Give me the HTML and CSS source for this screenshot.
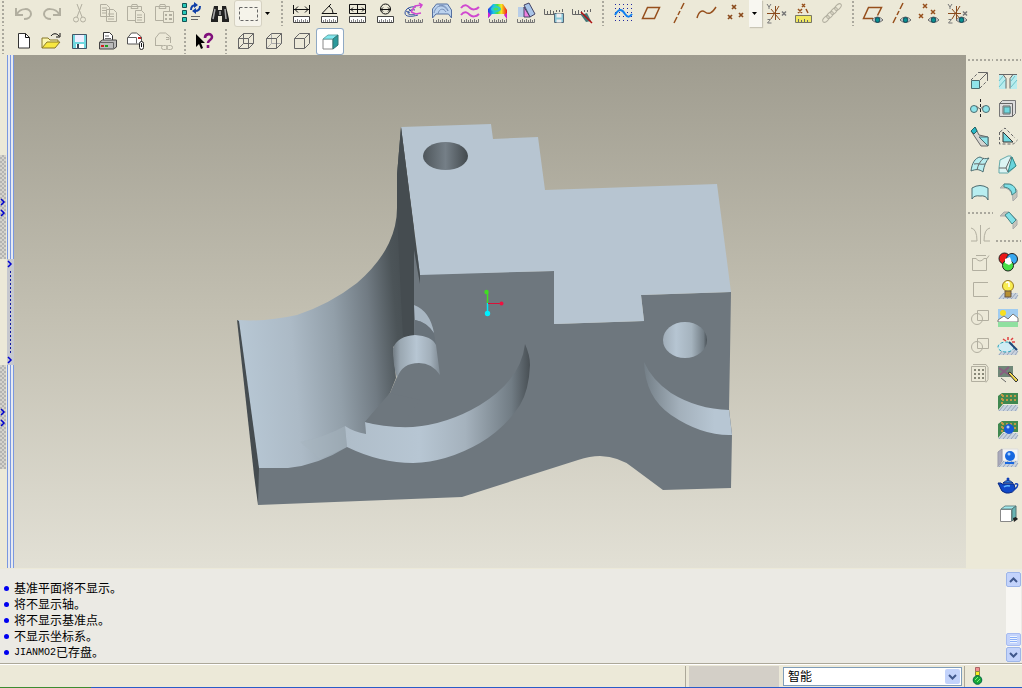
FILE: index.html
```
<!DOCTYPE html>
<html lang="zh-CN">
<head>
    <meta charset="UTF-8">
    <meta name="viewport" content="width=device-width, initial-scale=1.0">
    <title>JIANMO2</title>
    <link rel="stylesheet" href="styles.css">
</head>
<body>
    <!-- shared icon parts -->
    <svg class="defs" width="0" height="0">
        <defs>
            <symbol id="ruler" viewBox="0 0 24 24">
                <path d="M3.500 15.500h16v6h-16z" fill="#fff" stroke="#444"/>
                <path d="M5.500 21v-2M7.500 21v-3M9.500 21v-2M11.500 21v-3M13.500 21v-2M15.500 21v-3M17.500 21v-2" stroke="#888"/>
            </symbol>
            <symbol id="ruler-thin" viewBox="0 0 24 24">
                <path d="M3.500 18v3.500h17V18M6.500 21v-2M8.500 21v-3M10.500 21v-2M12.500 21v-3M14.500 21v-2M16.500 21v-3M18.500 21v-2" fill="none" stroke="#777"/>
            </symbol>
            <symbol id="eye" viewBox="0 0 24 24">
                <path d="M11 19q5.500-6 11 0q-5.500 5-11 0z" fill="#e4e4e4" stroke="#666"/>
                <circle cx="16.500" cy="19" r="2.400" fill="#089090" stroke="#145"/>
            </symbol>
            <symbol id="floor" viewBox="0 0 24 24">
                <path d="M2 21l5-6h15l-1 6z" fill="#c9d3df"/>
                <path d="M3 21l5-6M7 21l5-6M11 21l5-6M15 21l5-6M19 21l3-4" stroke="#98a5b8"/>
            </symbol>
            <symbol id="axes" viewBox="0 0 24 24">
                <path d="M3 12.500h13M7 8l9 11M15 5L7 18M11.500 5v14" stroke="#8a4a1c"/>
                <path d="M3 3l2 3 2-3M5 6v2M3.500 18.500h3l-3 3.500h4" fill="none" stroke="#777"/>
                <path d="M18 10.500l4 4M22 10.500l-4 4" stroke="#777" stroke-width="1.500"/>
            </symbol>
            <symbol id="points" viewBox="0 0 24 24">
                <path d="M9 4l4 4M13 4l-4 4M16 12l4 4M20 12l-4 4M5 14l4 4M9 14l-4 4" stroke="#8a4a1c" stroke-width="1.700"/>
            </symbol>
            <linearGradient id="rainbow">
                <stop offset="0" stop-color="#2038e8"/>
                <stop offset=".3" stop-color="#18c8e8"/>
                <stop offset=".5" stop-color="#50e040"/>
                <stop offset=".7" stop-color="#f8e820"/>
                <stop offset="1" stop-color="#f01818"/>
            </linearGradient>
        </defs>
    </svg>

    <header class="toolbars">
        <div class="toolbar">
            <span class="grip first"></span>
            <button class="tool" type="button" aria-label="撤消"><svg viewBox="0 0 24 24"><path d="M4 7v7h7M5 13c3-6 14-7 14 0c0 3-3 5-7 5" class="off thick"/></svg></button>
            <button class="tool" type="button" aria-label="重做"><svg viewBox="0 0 24 24"><path d="M20 7v7h-7M19 13c-3-6-15-7-15 0c0 3 3 5 7 5" class="off thick"/></svg></button>
            <button class="tool" type="button" aria-label="剪切"><svg viewBox="0 0 24 24"><path d="M9 3l5 13M14 3L9 16" class="off"/><circle cx="8" cy="18.500" r="2.500" class="off"/><circle cx="15" cy="18.500" r="2.500" class="off"/></svg></button>
            <button class="tool" type="button" aria-label="复制"><svg viewBox="0 0 24 24"><path d="M4.500 3.500h6l3 3v9h-9zM10.500 8.500h7l3 3v9h-10z" class="off paper"/><path d="M6 7h5M6 9.500h4M6 12h4M12 13h6M12 15.500h6M12 18h6" class="off"/></svg></button>
            <button class="tool" type="button" aria-label="粘贴"><svg viewBox="0 0 24 24"><path d="M3.500 5.500h14v14h-14zM7 7.500l1-4h5l1 4z" class="off"/><path d="M11.500 9.500h6l3 3v9h-9z" class="off paper"/><path d="M13 14h5M13 16.500h5M13 19h5" class="off"/></svg></button>
            <button class="tool" type="button" aria-label="选择性粘贴"><svg viewBox="0 0 24 24"><path d="M3.500 5.500h14v14h-14zM7 7.500l1-4h5l1 4z" class="off"/><path d="M11.500 10.500h10v11h-10z" class="off paper"/><path d="M13 14h2M17 14h3M13 18h2M17 18h3" class="off thick"/></svg></button>
            <button class="tool" type="button" aria-label="再生"><svg viewBox="0 0 24 24"><path d="M2.500 2.500h4v4h-4zM2.500 9.500h4v4h-4zM2.500 16.500h4v4h-4z" fill="#28c8b8" stroke="#155"/><path d="M11 9c0-4 2-5 5-5M20 5c0 4-2 5-5 5" class="navy"/><path d="M14 1l4 3-4 3zM16 7l-4 3 4 3z" fill="#1040a8"/><path d="M11 15.500h9M11 18.500h7" class="gray"/></svg></button>
            <button class="tool" type="button" aria-label="查找"><svg viewBox="0 0 24 24"><path d="M6 5h4v4h4V5h4l3 13v3h-7v-6h-4v6H3v-3z" fill="#222"/><path d="M7 8L5 18M17 8l1 10M12 10v4" stroke="#aaa" stroke-width="1.500"/></svg></button>
            <button class="tool raised" type="button" aria-label="选取框"><svg viewBox="0 0 24 24"><path d="M3.500 6.500h18v13h-18z" class="gray dash"/></svg></button>
            <button class="drop" type="button" aria-label="选取选项"><svg viewBox="0 0 7 4"><path d="M1 0h5L3.500 3z"/></svg></button>
            <span class="grip"></span>
            <button class="tool" type="button" aria-label="距离"><svg viewBox="0 0 24 24"><path d="M3.500 4v9M19.500 4v9M4 8.500h15M8 5.500l-3 3 3 3M15 5.500l3 3-3 3" class="ink"/><use href="#ruler"/></svg></button>
            <button class="tool" type="button" aria-label="角"><svg viewBox="0 0 24 24"><path d="M19 12.500H4L13 3M11 5q4 3 4 7" class="ink"/><use href="#ruler"/></svg></button>
            <button class="tool" type="button" aria-label="区域"><svg viewBox="0 0 24 24"><path d="M3.500 3.500h16v9h-16zM11.500 3v10M4 8.500h15M7 6.500l-2 2 2 2M16 6.500l2 2-2 2" class="ink"/><use href="#ruler"/></svg></button>
            <button class="tool" type="button" aria-label="直径"><svg viewBox="0 0 24 24"><circle cx="11.500" cy="8" r="5" class="ink"/><path d="M6 8.500h11M9 6.500l-2 2 2 2M14 6.500l2 2-2 2" class="ink"/><use href="#ruler"/></svg></button>
            <button class="tool" type="button" aria-label="曲率"><svg viewBox="0 0 24 24"><path d="M14 6C8 5 3 8 3 12s6 4 13 2M13 9c-4-1-7 1-7 3s4 2 7 1M4 10l4 2M6 7l3 3" class="blue"/><path d="M9 11l4-6 6-1M9 11l5 2 5-1M17 2l3 2-2 3" class="magenta"/><use href="#ruler-thin"/></svg></button>
            <button class="tool" type="button" aria-label="截面"><svg viewBox="0 0 24 24"><path d="M2.500 17V8l4-5h11l4 6v8l-3-4H6z" fill="#bcd3ee" stroke="#5570a0"/><path d="M4 12c2-9 10-9 14-2M8 13c1-6 6-6 8-2M9 5c4-2 8 1 9 5" class="blue fine"/><use href="#ruler-thin"/></svg></button>
            <button class="tool" type="button" aria-label="偏移"><svg viewBox="0 0 24 24"><path d="M3 7c4-5 7-2 9 0s6 2 9-1M3 14c4-5 7-2 9 0s6 2 9-1" class="magenta thick"/><use href="#ruler-thin"/></svg></button>
            <button class="tool" type="button" aria-label="着色曲率"><svg viewBox="0 0 24 24"><path d="M2 17V8l5-5h10l4 6v9l-3-5H6z" fill="url(#rainbow)"/><ellipse cx="10" cy="8" rx="5" ry="3" fill="#28c8d8"/><ellipse cx="10" cy="8" rx="2.500" ry="1.500" fill="#48e060"/><path d="M2 17v-6l3 3M21 18v-6l-3 2" fill="#d020d0"/><use href="#ruler-thin"/></svg></button>
            <button class="tool" type="button" aria-label="拔模检测"><svg viewBox="0 0 24 24"><path d="M4 6h6v10H4z" fill="#b8cde8"/><path d="M10 4l5-2 6 11-5 3z" fill="#a8c4e8" stroke="#446"/><path d="M10 6v10h6z" fill="#f080e0" stroke="#446"/><use href="#ruler-thin"/></svg></button>
            <button class="tool" type="button" aria-label="保存分析"><svg viewBox="0 0 24 24"><path d="M2.500 8v5.500h10M5.500 13v-3M8.500 13V9M11.500 13v-3M14.500 11V9M17.500 11V9M20.500 11V8" class="gray"/><path d="M12.500 12.500h9v9h-9z" fill="#8ac8d8" stroke="#567"/><path d="M14.500 12.500h5v4h-5zM14.500 18.500h5v3h-5z" fill="#eee"/></svg></button>
            <button class="tool" type="button" aria-label="隐藏分析"><svg viewBox="0 0 24 24"><path d="M2.500 8v5.500h10M5.500 13v-3M8.500 13V9M11.500 13v-3M14.500 11V9M17.500 11V9M20.500 11V8" class="gray"/><path d="M11 14l6-2 4 8-5 1z" fill="#477"/><path d="M11 11l11 11" stroke="#b01010" stroke-width="1.500"/></svg></button>
            <span class="grip"></span>
            <button class="tool" type="button" aria-label="草绘"><svg viewBox="0 0 24 24"><path d="M4 3.500h17M4 7.500h17M4 11.500h17M4 15.500h17M4 19.500h17" class="dots"/><path d="M4 14c4-7 7-6 10-1 2 3 4 4 7 0" class="azure thick"/></svg></button>
            <button class="tool" type="button" aria-label="平面"><svg viewBox="0 0 24 24"><path d="M8.500 6.500h12l-5 11h-12z" class="brown"/></svg></button>
            <button class="tool" type="button" aria-label="轴"><svg viewBox="0 0 24 24"><path d="M17 2l-3 6M13 10l-2 4M10 16l-3 6" class="brown"/></svg></button>
            <button class="tool" type="button" aria-label="曲线"><svg viewBox="0 0 24 24"><path d="M2 17c2-7 5-8 8-6 4 3 7 1 11-5" class="brown"/></svg></button>
            <button class="tool" type="button" aria-label="点"><svg viewBox="0 0 24 24"><use href="#points"/></svg></button>
            <button class="drop lifted" type="button" aria-label="点选项"><svg viewBox="0 0 7 4"><path d="M1 0h5L3.500 3z"/></svg></button>
            <button class="tool" type="button" aria-label="坐标系"><svg viewBox="0 0 24 24"><use href="#axes"/></svg></button>
            <button class="tool" type="button" aria-label="分析特征"><svg viewBox="0 0 24 24"><path d="M10 3l3 3M13 3l-3 3M6 8l4 4M10 8l-4 4M14 8l2 4" class="brown"/><path d="M3.500 14.500h16v7h-16z" fill="#f0e860" stroke="#776"/><path d="M6.500 21v-3M9.500 21v-2M12.500 21v-3M15.500 21v-2" class="gray"/></svg></button>
            <button class="tool" type="button" aria-label="参照"><svg viewBox="0 0 24 24"><ellipse cx="6" cy="18" rx="4" ry="2.200" transform="rotate(-45 6 18)" class="off"/><ellipse cx="10" cy="14" rx="4" ry="2.200" transform="rotate(-45 10 14)" class="off"/><ellipse cx="14" cy="10" rx="4" ry="2.200" transform="rotate(-45 14 10)" class="off"/><ellipse cx="18" cy="6" rx="4" ry="2.200" transform="rotate(-45 18 6)" class="off"/></svg></button>
            <span class="grip"></span>
            <button class="tool" type="button" aria-label="显示平面"><svg viewBox="0 0 24 24"><path d="M12 17.500H2.500l5-11h13l-4 8" class="brown"/><use href="#eye"/></svg></button>
            <button class="tool" type="button" aria-label="显示轴"><svg viewBox="0 0 24 24"><path d="M14 2l-3 6M10 10l-2 4M7 16l-3 6" class="brown"/><use href="#eye"/></svg></button>
            <button class="tool" type="button" aria-label="显示点"><svg viewBox="0 0 24 24"><path d="M6 3l4 4M10 3L6 7M14 9l4 4M18 9l-4 4M2 13l4 4M6 13l-4 4" class="brown"/><use href="#eye"/></svg></button>
            <button class="tool" type="button" aria-label="显示坐标系"><svg viewBox="0 0 24 24"><use href="#axes"/><use href="#eye"/></svg></button>
        </div>
        <div class="toolbar">
            <span class="grip first"></span>
            <button class="tool" type="button" aria-label="新建"><svg viewBox="0 0 24 24"><path d="M6.500 4.500h7l4 4v10.500h-11z" fill="#fff" stroke="#333"/><path d="M13.500 4.500v4h4" class="ink"/></svg></button>
            <button class="tool" type="button" aria-label="打开"><svg viewBox="0 0 24 24"><path d="M2 19V9h6l2 2h8v3" fill="#fbf6b0" stroke="#887828"/><path d="M2 19l5-6h13l-5 6z" fill="#f8e840" stroke="#887828"/><path d="M11 7c2-3 6-3 8 0M20 4v4h-4" class="ink"/></svg></button>
            <button class="tool" type="button" aria-label="保存"><svg viewBox="0 0 24 24"><path d="M4.500 5.500h14v14h-14z" fill="#70d8e0" stroke="#456"/><path d="M7 6h9v7H7z" fill="#eef"/><path d="M8 15h8v4H8z" fill="#fff"/><path d="M9 15h2v4H9z" fill="#345"/></svg></button>
            <button class="tool" type="button" aria-label="打印"><svg viewBox="0 0 24 24"><path d="M7.500 12V3.500h6l3 3V12" fill="#fff" stroke="#333"/><path d="M9 7h4M9 9.500h6" class="gray"/><path d="M3.500 13l3-2h14v7l-3 2h-14z" fill="#bbb" stroke="#444"/><path d="M3.500 13.500h14v6" class="gray"/><path d="M5 16h3v2H5z" fill="#d02020"/><path d="M9 16h3v2H9z" fill="#20a020"/></svg></button>
            <button class="tool" type="button" aria-label="发送附件"><svg viewBox="0 0 24 24"><path d="M3.500 15V9l4-5h5l5 4v7z" fill="#fff" stroke="#555"/><path d="M3.500 8.500h9v6" class="gray"/><path d="M14 8h3v2h-3z" fill="#d02020"/><rect x="15.500" y="12.500" width="4" height="8" rx="2" fill="#fff" stroke="#222"/><path d="M17.500 14v4" class="ink"/></svg></button>
            <button class="tool" type="button" aria-label="发送链接"><svg viewBox="0 0 24 24"><path d="M3.500 17V9l4-5h6l5 4v6M3.500 16.500h7M14 8.500h3v2h-3" class="off"/><rect x="9.500" y="16.500" width="6" height="4" rx="2" class="off"/><rect x="14.500" y="16.500" width="6" height="4" rx="2" class="off"/></svg></button>
            <span class="grip"></span>
            <button class="tool" type="button" aria-label="上下文帮助"><svg viewBox="0 0 24 24"><path d="M3 5v13l3-3 2 5 2-1-2-5h4z"/><path d="M12 9c0-5 7-5 7-1 0 3-4 3-4 6M15 16v3" stroke="#80107c" stroke-width="2.600" fill="none"/></svg></button>
            <span class="grip"></span>
            <button class="tool" type="button" aria-label="线框"><svg viewBox="0 0 24 24"><path d="M4.500 9.500h10v10h-10zM9.500 4.500h10v10h-10zM4.500 9.500l5-5M14.500 9.500l5-5M4.500 19.500l5-5M14.500 19.500l5-5" class="gray"/></svg></button>
            <button class="tool" type="button" aria-label="隐藏线"><svg viewBox="0 0 24 24"><path d="M9.500 4.500v10h10M4.500 19.500l5-5" stroke="#aaa" fill="none"/><path d="M4.500 9.500h10v10h-10zM4.500 9.500l5-5h10v10l-5 5M14.500 9.500l5-5" class="gray"/></svg></button>
            <button class="tool" type="button" aria-label="无隐藏线"><svg viewBox="0 0 24 24"><path d="M4.500 9.500h10v10h-10zM4.500 9.500l5-5h10v10l-5 5M14.500 9.500l5-5" class="gray"/></svg></button>
            <button class="tool pressed" type="button" aria-label="着色"><svg viewBox="0 0 24 24"><path d="M5 10h10v10H5z" fill="#fff" stroke="#888"/><path d="M5 10l5-4h10l-5 4z" fill="#80e8f0" stroke="#6aa"/><path d="M15 10l5-4v10l-5 4z" fill="#2a9a9c" stroke="#377"/></svg></button>
        </div>
    </header>

    <main class="workspace">
        <div class="sash">
            <div class="sash-outer">
                <button class="sash-button" type="button" aria-label="展开导航器"><svg viewBox="0 0 6 104"><path d="M1 44l3 3-3 3M1 55l3 3-3 3" class="chevron"/></svg></button>
                <button class="sash-button" type="button" aria-label="展开浏览器"><svg viewBox="0 0 6 104"><path d="M1 44l3 3-3 3M1 55l3 3-3 3" class="chevron"/></svg></button>
            </div>
            <div class="sash-inner">
                <button class="sash-button tall" type="button" aria-label="折叠"><svg viewBox="0 0 7 106"><path d="M1 2l3 3-3 3M1 98l3 3-3 3" class="chevron"/><path d="M3.500 12v82" stroke="#1018a0" stroke-dasharray="2 2"/></svg></button>
            </div>
        </div>

        <section class="viewport">
            <svg class="model" viewBox="14 55 952 513" role="img" aria-label="JIANMO2">
                <defs>
                    <linearGradient id="wall" gradientUnits="userSpaceOnUse" x1="240" y1="350" x2="415" y2="335">
                        <stop offset="0" stop-color="#b7c7d4"/>
                        <stop offset=".3" stop-color="#acbac6"/>
                        <stop offset=".55" stop-color="#929fa9"/>
                        <stop offset=".75" stop-color="#717b83"/>
                        <stop offset=".9" stop-color="#4c5458"/>
                        <stop offset="1" stop-color="#454c50"/>
                    </linearGradient>
                    <linearGradient id="band" gradientUnits="userSpaceOnUse" x1="345" y1="0" x2="530" y2="0">
                        <stop offset="0" stop-color="#afbdc9"/>
                        <stop offset=".4" stop-color="#b7c6d3"/>
                        <stop offset=".65" stop-color="#a5b2bd"/>
                        <stop offset=".9" stop-color="#717c84"/>
                        <stop offset="1" stop-color="#484f54"/>
                    </linearGradient>
                    <linearGradient id="right-band">
                        <stop offset="0" stop-color="#747f87"/>
                        <stop offset=".4" stop-color="#a3b0bb"/>
                        <stop offset=".8" stop-color="#b7c6d3"/>
                    </linearGradient>
                    <linearGradient id="stub">
                        <stop offset="0" stop-color="#717b83"/>
                        <stop offset=".15" stop-color="#9aa7b1"/>
                        <stop offset=".5" stop-color="#b7c6d3"/>
                        <stop offset=".8" stop-color="#a2afba"/>
                        <stop offset="1" stop-color="#7e8992"/>
                    </linearGradient>
                    <linearGradient id="hole-top">
                        <stop offset="0" stop-color="#4e565b"/>
                        <stop offset=".5" stop-color="#757f87"/>
                        <stop offset="1" stop-color="#42494d"/>
                    </linearGradient>
                    <linearGradient id="hole-front">
                        <stop offset="0" stop-color="#a0adb8"/>
                        <stop offset=".3" stop-color="#b6c5d2"/>
                        <stop offset=".65" stop-color="#a5b3be"/>
                        <stop offset=".92" stop-color="#737e86"/>
                        <stop offset="1" stop-color="#485056"/>
                    </linearGradient>
                </defs>
                <!-- front face -->
                <path d="M412 240L425 274L554 271V324L644 321L641 295L731 292L730 355L729 409L732 434L731 488L663 490L632 467Q620 457 600 456Q590 456 578 460L462 497L258 505V468L345 426L390 393L413 340Z" fill="#6e777e"/>
                <!-- top face -->
                <path d="M401 127L491 124L493 139L538 137L545 190L717 184L731 292L641 295L644 321L554 324V271L420 275Z" fill="#b7c5d1"/>
                <!-- curved wall -->
                <path d="M238 320Q265 322 297 315Q330 304 357 283Q379 264 389 243Q397 226 397 208V175L401 127L414 230V332L393 347L396 378L390 393L365 422L366 435L347 447Q318 465 288 468H258Z" fill="url(#wall)"/>
                <path d="M401 127L420 275V284L414 250V338L403 336Q400 280 397 208V175Z" fill="#454c50"/>
                <path d="M345 426Q325 437 300 442L320 459Q335 453 347 447Z" fill="#a5b3be" opacity=".5"/>
                <path d="M237 320L239 321L259 468L258 505L254 475Z" fill="#454c50"/>
                <!-- large boss edge -->
                <path d="M345 426Q354 432 366 434L365 422Q385 428 413 427Q448 424 480 405Q521 380 525 344Q530 355 530 365Q529 390 520 405Q505 428 480 443Q447 462 413 463Q380 463 347 447Z" fill="url(#band)"/>
                <path d="M365 422L390 393L420 400L400 427Z" fill="#6e777e"/>
                <!-- small boss -->
                <path d="M414 305Q430 311 434 333Q427 322 415 320Z" fill="#a8b6c2"/>
                <path d="M415 320Q427 322 434 334L436 345L414 335Z" fill="#68727a"/>
                <path d="M393 348Q398 336 415 335Q432 336 436 345L440 375Q432 363 419 363Q402 363 397 378Q393 365 393 348Z" fill="url(#stub)"/>
                <!-- right boss edge -->
                <path d="M644 362Q652 380 671 393Q697 409 729 410L732 435Q702 436 671 415Q645 397 644 362Z" fill="url(#right-band)"/>
                <!-- holes -->
                <ellipse cx="445.500" cy="156" rx="22.500" ry="14" fill="url(#hole-top)"/>
                <ellipse cx="685" cy="340" rx="22" ry="18" fill="url(#hole-front)"/>
                <!-- spin centre -->
                <path d="M487.500 292V303" stroke="#40e020" stroke-width="1.500"/>
                <path d="M487.500 303V313" stroke="#00e8f8" stroke-width="1.500"/>
                <path d="M488 303.500H501" stroke="#d81038"/>
                <circle cx="486.500" cy="292" r="2.200" fill="#40e020"/>
                <circle cx="501.500" cy="303.500" r="2" fill="#f01040"/>
                <circle cx="487.500" cy="313.500" r="2.700" fill="#00f0ff"/>
            </svg>
        </section>

        <aside class="side">
            <div class="side-column">
                <span class="grip-row"></span>
                <button class="tool side-tool" type="button" aria-label="拉伸"><svg viewBox="0 0 24 24"><path d="M3.500 12.500h8v8h-8z" class="cyan"/><path d="M3 12l8-8M12 20l8-8" class="gray dash"/><path d="M11 4.500h8.500V12M12 12l7-7" class="gray"/></svg></button>
                <button class="tool side-tool" type="button" aria-label="镜像"><svg viewBox="0 0 24 24"><circle cx="6" cy="13" r="3.500" class="cyan"/><circle cx="18" cy="13" r="3.500" class="cyan"/><path d="M12.500 3v20" stroke="#222" stroke-dasharray="3 2"/><path d="M8 10l4 3M16 10l-4 3" class="gray"/></svg></button>
                <button class="tool side-tool" type="button" aria-label="扫描混合"><svg viewBox="0 0 24 24"><path d="M3 7l4-4 4 8 9 2v9h-7z" fill="#d4d4d0" stroke="#666"/><path d="M3 7l4-4 2 4-3 3z" fill="#28b8c8" stroke="#266"/><path d="M11 13h9v9z" class="cyan"/></svg></button>
                <button class="tool side-tool" type="button" aria-label="边界混合"><svg viewBox="0 0 24 24"><path d="M3 19c1-8 4-13 9-14 3 2 6 2 9 1-3 3-5 8-6 14-4-3-7-3-12-1z" class="cyan pale"/><path d="M6 12c4-1 7 1 11 0M9 18c1-5 3-9 7-12" class="gray"/></svg></button>
                <button class="tool side-tool" type="button" aria-label="造型"><svg viewBox="0 0 24 24"><path d="M4 8q8-5 16 0v12q-2-5-8-4-6-1-8 3z" class="cyan pale"/></svg></button>
                <span class="grip-row wide"></span>
                <button class="tool side-tool" type="button" aria-label="合并"><svg viewBox="0 0 24 24"><path d="M12.500 3v19M3 6q6 1 6 13H3M22 6q-6 1-6 13h6" class="off"/></svg></button>
                <button class="tool side-tool" type="button" aria-label="修剪"><svg viewBox="0 0 24 24"><path d="M4.500 8.500v12h14v-12M4 8.500h4q4 5 8 0h3l2-3M8 5.500h10" class="off"/></svg></button>
                <button class="tool side-tool" type="button" aria-label="延伸"><svg viewBox="0 0 24 24"><path d="M20 4.500H5.500v14H20" class="off"/></svg></button>
                <button class="tool side-tool" type="button" aria-label="交截"><svg viewBox="0 0 24 24"><circle cx="9" cy="13" r="5.500" class="off"/><path d="M9.500 4.500h11v10h-11z" class="off"/></svg></button>
                <button class="tool side-tool" type="button" aria-label="投影"><svg viewBox="0 0 24 24"><circle cx="9" cy="13" r="5.500" class="off"/><path d="M9.500 4.500h11v10h-11z" class="off"/></svg></button>
                <button class="tool side-tool" type="button" aria-label="阵列"><svg viewBox="0 0 24 24"><path d="M3.500 4.500h14v15h-14zM5 2.500h13l2 3v12l-2 3" class="off"/><path d="M6 8h10M6 12h10M6 16h10" stroke="#888878" stroke-width="2" stroke-dasharray="2 2" fill="none"/></svg></button>
            </div>
            <div class="side-column">
                <span class="grip-row"></span>
                <button class="tool side-tool" type="button" aria-label="孔"><svg viewBox="0 0 24 24"><path d="M3 7h4l3 4v10H3zM21 7h-4l-3 4v10h7z" fill="#b8ecee"/><path d="M3 6.500h4l3 4v10M21 6.500h-4l-3 4v10M7 6.500h10" class="gray"/><path d="M3 19l6-7M3 13l4-5M15 19l6-7M15 13l4-5" stroke="#6cc4ca"/></svg></button>
                <button class="tool side-tool" type="button" aria-label="壳"><svg viewBox="0 0 24 24"><path d="M3.500 7.500l3-3h13v13l-3 3h-13z" fill="#ddd" stroke="#777"/><path d="M3.500 7.500h13v13M7 10h7v8H7z" class="gray"/><path d="M8 11h6v6H8z" fill="#70d8e0" stroke="#588"/></svg></button>
                <button class="tool side-tool" type="button" aria-label="筋"><svg viewBox="0 0 24 24"><path d="M7 8v10h10z" fill="#70d8e0" stroke="#333"/><path d="M3.500 8v12h14l4-4M4 8l5-4 10 10" class="gray dash"/></svg></button>
                <button class="tool side-tool" type="button" aria-label="拔模"><svg viewBox="0 0 24 24"><path d="M4 8l8-4h3l5 10-8 7H3v-5z" fill="#dcf4f4" stroke="#6aa"/><path d="M12 20l4-15 4 9z" fill="#68d4dc" stroke="#388"/><path d="M3 16h7l2 4M10 16l5-11" class="gray"/></svg></button>
                <button class="tool side-tool" type="button" aria-label="倒圆角"><svg viewBox="0 0 24 24"><path d="M4 8h6q7 3 7 13l4-4V10l-6-6H8z" fill="#c4c4bc" stroke="#aaa"/><path d="M8 4q12-1 12 8l-4 3q0-7-8-8z" fill="#80e0e8" stroke="#488"/></svg></button>
                <button class="tool side-tool" type="button" aria-label="倒角"><svg viewBox="0 0 24 24"><path d="M4 8h5l8 8v5l4-4v-5L13 4H8z" fill="#c4c4bc" stroke="#aaa"/><path d="M9 7l4-3 7 8-4 4z" fill="#80e0e8" stroke="#488"/></svg></button>
                <span class="grip-row wide"></span>
                <button class="tool side-tool" type="button" aria-label="颜色和外观"><svg viewBox="0 0 24 24"><circle cx="8.500" cy="8.500" r="5.500" fill="#e81818" stroke="#222"/><circle cx="16" cy="9" r="5.500" fill="#38a8f0" stroke="#222"/><circle cx="12" cy="15.500" r="5.500" fill="#48e048" stroke="#222"/><path d="M9 9l5-2 2 6-3 2-4-2z" fill="#fff"/></svg></button>
                <button class="tool side-tool" type="button" aria-label="光源"><svg viewBox="0 0 24 24"><use href="#floor"/><circle cx="12" cy="8" r="5.500" fill="#f8ec50" stroke="#987820"/><path d="M9 13h6v6H9z" fill="#b89030" stroke="#654"/><path d="M10 5q2-2 3 0v4" stroke="#fff" stroke-width="1.500" fill="none"/></svg></button>
                <button class="tool side-tool" type="button" aria-label="场景"><svg viewBox="0 0 24 24"><path d="M2 3h20v18H2z" fill="#a0ccf0"/><circle cx="7" cy="7" r="3" fill="#f8e020"/><path d="M2 14l6-4 4 3 5-5 5 4v4H2z" fill="#fff" stroke="#777"/><path d="M2 16h20v5H2z" fill="#90e0a0"/></svg></button>
                <button class="tool side-tool" type="button" aria-label="渲染窗口"><svg viewBox="0 0 24 24"><use href="#floor"/><ellipse cx="10" cy="13" rx="8" ry="5" fill="#d0ecf4" stroke="#20a0b8" stroke-dasharray="3 2"/><path d="M13 8l8 8" stroke="#204878" stroke-width="2"/><path d="M12 3v3M17 4l-2 2M7 5l3 2M19 8h-3" stroke="#e04040" stroke-width="1.500"/></svg></button>
                <button class="tool side-tool" type="button" aria-label="渲染区域"><svg viewBox="0 0 24 24"><path d="M2 4h15v11H2z" fill="#708878"/><path d="M3 6l12 8M4 13l9-8" stroke="#886080" stroke-width="2"/><path d="M12 11l8 9 2-2-8-8z" fill="#f0d850" stroke="#333"/><path d="M5 16l5 4" class="gray"/></svg></button>
                <button class="tool side-tool" type="button" aria-label="墙壁"><svg viewBox="0 0 24 24"><use href="#floor"/><path d="M2 6l4-3h16v11H7l-5 6z" fill="#408850"/><path d="M6 4v11M6 6h16M6 10h16" stroke="#c09848" stroke-width="2" stroke-dasharray="2 2"/></svg></button>
                <button class="tool side-tool" type="button" aria-label="房间"><svg viewBox="0 0 24 24"><use href="#floor"/><path d="M2 6l4-3h16v11H7l-5 6z" fill="#408850"/><path d="M6 4v11M6 6h16M6 10h16" stroke="#c09848" stroke-width="2" stroke-dasharray="2 2"/><circle cx="13" cy="11" r="5" fill="#1858d8"/><circle cx="12" cy="9" r="1.500" fill="#a8d0ff"/></svg></button>
                <button class="tool side-tool" type="button" aria-label="透视"><svg viewBox="0 0 24 24"><path d="M6 3h16v12H6z" fill="#f4f4f4" stroke="#ddd"/><path d="M2 6l4-3v12l-4 6z" fill="#aab" stroke="#99a"/><use href="#floor"/><circle cx="14" cy="10" r="5" fill="#1868e0"/><circle cx="13" cy="8" r="1.500" fill="#a8d0ff"/><path d="M9 17h9" stroke="#1868e0" stroke-width="2"/></svg></button>
                <button class="tool side-tool" type="button" aria-label="渲染"><svg viewBox="0 0 24 24"><path d="M6 10h12q3 8-5 9h-3q-5-1-6-6L2 9h3z" fill="#1048c8" stroke="#082880"/><path d="M7 9q5-5 10 0z" fill="#3888e8" stroke="#082880"/><circle cx="12" cy="5" r="1.500" fill="#1040b8"/><path d="M19 10q4-1 2 3l-3 3" stroke="#1040b8" stroke-width="1.500" fill="none"/><path d="M8 13q2-2 6-1" stroke="#60b8ff" stroke-width="1.500" fill="none"/></svg></button>
                <button class="tool side-tool" type="button" aria-label="视图"><svg viewBox="0 0 24 24"><path d="M4.500 7.500h11v12h-11z" fill="#fff" stroke="#888"/><path d="M5 7l4-3h11l-4 3z" fill="#a0e8ec" stroke="#688"/><path d="M16 7l4-3v11l-4 4z" fill="#68b4b4" stroke="#577"/><path d="M17 16l3-1 2 2-4 3z" fill="#222"/></svg></button>
            </div>
        </aside>
    </main>

    <section class="messages">
        <ul class="message-list">
            <li>基准平面将不显示。</li>
            <li>将不显示轴。</li>
            <li>将不显示基准点。</li>
            <li>不显示坐标系。</li>
            <li><span class="latin">JIANMO2</span>已存盘。</li>
        </ul>
        <div class="scrollbar">
            <button class="scroll-button" type="button" aria-label="向上"><svg viewBox="0 0 9 6"><path d="M1 5l3.500-3.500L8 5"/></svg></button>
            <div class="track"><span class="thumb"></span></div>
            <button class="scroll-button" type="button" aria-label="向下"><svg viewBox="0 0 9 6"><path d="M1 1l3.500 3.500L8 1"/></svg></button>
        </div>
    </section>

    <footer class="status">
        <div class="status-text"></div>
        <div class="status-box"></div>
        <div class="filter">
            <select aria-label="过滤器">
                <option>智能</option>
            </select>
            <span class="filter-arrow"><svg viewBox="0 0 9 6"><path d="M1 1l3.500 3.500L8 1"/></svg></span>
        </div>
        <div class="status-light">
            <svg viewBox="0 0 12 20"><path d="M3.500 1.500h4v4h-4z" fill="#f09090" stroke="#a66"/><path d="M3.500 5.500h4v4h-4z" fill="#f8f020" stroke="#884"/><circle cx="5.500" cy="14" r="4.300" fill="#18a838" stroke="#064"/><path d="M3 14l3-3M5 16l3-3" stroke="#80f080"/></svg>
        </div>
    </footer>
</body>
</html>
```
FILE: styles.css
```
* {
    box-sizing: border-box;
}
body {
    margin: 0;
    height: 100vh;
    display: flex;
    flex-direction: column;
    overflow: hidden;
    background-color: #ece9d8;
    color: #000;
    font-family: "Noto Sans CJK SC", sans-serif;
    font-size: 12px;
}
button {
    margin: 0;
    padding: 0;
    border: none;
    background: none;
    flex: none;
}
svg {
    display: block;
    overflow: hidden;
}
.defs {
    position: absolute;
}

/* toolbars */
.toolbars {
    flex: none;
    display: flex;
    flex-direction: column;
    gap: 1px;
}
.toolbar {
    display: flex;
    height: 27px;
}
.tool {
    width: 28px;
    height: 27px;
    padding: 1px 2px 2px;
    border-radius: 3px;
}
.tool svg {
    width: 24px;
    height: 24px;
}
.raised {
    background-color: #f5f3ea;
    box-shadow: inset 0 0 0 1px #d6d2c2;
}
.pressed {
    background-color: #fff;
    box-shadow: inset 0 0 0 1px #8fa9c4;
}
.drop {
    width: 13px;
    padding-left: 2px;
}
.drop svg {
    width: 7px;
    height: 4px;
}
.lifted {
    background-color: #f8f7f1;
    box-shadow: 1px 1px 1px #c8c5b5;
}
.grip {
    flex: none;
    width: 13px;
    margin: 1px 0;
    background: repeating-linear-gradient(#aaa89d 0 2px, #ece9d8 2px 4px) 6px 0 / 2px 100% no-repeat;
}
.grip.first {
    width: 10px;
    background-position: 2px 0;
}

/* icon strokes */
.off, .gray, .ink, .brown, .blue, .navy, .azure, .magenta {
    fill: none;
}
.off {
    stroke: #b2afa0;
}
.off.paper {
    fill: #ece9d8;
}
.gray {
    stroke: #666;
}
.ink {
    stroke: #111;
}
.brown {
    stroke: #964f1c;
    stroke-width: 1.5;
}
.blue {
    stroke: #3050a0;
}
.navy {
    stroke: #1040a8;
    stroke-width: 2;
}
.azure {
    stroke: #1080f0;
}
.magenta {
    stroke: #d048d0;
    stroke-width: 1.5;
}
.cyan {
    fill: #90e4ea;
    stroke: #4c6c70;
}
.cyan.pale {
    fill: #b8eef0;
}
.thick {
    stroke-width: 2;
}
.fine {
    stroke: #7890b8;
}
.dash {
    stroke-dasharray: 3 2;
}
.dots {
    stroke: #2028a0;
    stroke-dasharray: 1 3;
}
.chevron {
    fill: none;
    stroke: #0000d0;
    stroke-width: 1.5;
}

/* drawing area */
.workspace {
    flex: 1;
    min-height: 0;
    display: flex;
}
.sash {
    flex: none;
    width: 14px;
    display: flex;
    background: linear-gradient(90deg, #ece9d8 7px, #7a98e0 7px 8px, #e8eaf0 8px 10px, #7a98e0 10px 11px, #e8eaf0 11px 13px, #7a98e0 13px);
}
.sash-outer, .sash-inner {
    width: 7px;
    display: flex;
    flex-direction: column;
    justify-content: center;
    gap: 106px;
}
.sash-button {
    width: 6px;
    height: 104px;
    background: repeating-conic-gradient(#b4b4b2 0 25%, #d4d2cc 0 50%) 0 0 / 4px 4px;
}
.sash-button.tall {
    width: 7px;
    height: 106px;
    background: #c6c8ce;
}
.viewport {
    flex: 1;
    min-width: 0;
    background: linear-gradient(#9f9c8f, #c2bfb1 50%, #e2e0d5);
}
.model {
    width: 100%;
    height: 100%;
}
.side {
    flex: none;
    width: 56px;
    display: flex;
}
.side-column {
    width: 28px;
    display: flex;
    flex-direction: column;
}
.side-tool {
    height: 28px;
    padding: 2px;
}
.grip-row {
    flex: none;
    height: 11px;
    margin: 0 1px 0 2px;
    background: repeating-linear-gradient(90deg, #aaa89d 0 2px, #ece9d8 2px 4px) 0 4px / 100% 2px no-repeat;
}
.grip-row.wide {
    height: 14px;
    background-position: 0 6px;
}

/* message log */
.messages {
    flex: none;
    display: flex;
    justify-content: space-between;
    padding: 3px 1px 1px 0;
    border-top: 1px solid #ece9d8;
    border-bottom: 1px solid #aca899;
    background-color: #ebeae4;
}
.message-list {
    margin: 0;
    padding: 8px 0 2px 4px;
    list-style: none;
}
.message-list li {
    display: flex;
    align-items: center;
    height: 16px;
    line-height: 16px;
}
.message-list li::before {
    content: "";
    width: 5px;
    height: 5px;
    margin-right: 5px;
    border-radius: 50%;
    background-color: #0000f0;
}
.latin {
    padding-top: 2px;
    font-family: "Liberation Mono", monospace;
    font-size: 10px;
}
.scrollbar {
    width: 15px;
    display: flex;
    flex-direction: column;
    background-color: #f8f7f3;
}
.scroll-button {
    height: 15px;
    padding-left: 3px;
    border: 1px solid #9db5e8;
    border-radius: 2px;
    background-color: #c3d3fb;
}
.scroll-button svg, .filter-arrow svg {
    width: 9px;
    height: 6px;
    fill: none;
    stroke: #40588c;
    stroke-width: 2;
}
.scroll-button svg {
    margin-left: -1px;
}
.track {
    flex: 1;
    display: flex;
    flex-direction: column;
    justify-content: flex-end;
    padding-bottom: 1px;
}
.thumb {
    height: 13px;
    border: 1px solid #a8bcf0;
    border-radius: 2px;
    background: repeating-linear-gradient(#eef4fe 0 1px, #8cb0f8 1px 2px) 3px 2px / 7px 7px no-repeat #c3d3fb;
}

/* status bar */
.status {
    flex: none;
    height: 24px;
    display: flex;
    align-items: center;
    border-top: 1px solid #fff;
    background: linear-gradient(90deg, #3c8c30 91px, #2a5cc8 91px) 0 100% / 100% 1px no-repeat;
}
.status-text {
    flex: 1;
    height: 21px;
    border-right: 1px solid #aca899;
}
.status-box {
    width: 90px;
    height: 21px;
    margin: 0 4px 0 3px;
    background-color: #d3cfc7;
}
.filter {
    position: relative;
    width: 179px;
}
.filter select {
    display: block;
    width: 100%;
    height: 19px;
    padding: 0 20px 1px 4px;
    border: 1px solid #7f9db9;
    border-radius: 0;
    appearance: none;
    background-color: #fff;
    color: #000;
    font-family: inherit;
    font-size: 12px;
    line-height: 16px;
}
.filter-arrow {
    position: absolute;
    top: 2px;
    right: 2px;
    width: 15px;
    height: 15px;
    display: flex;
    align-items: center;
    justify-content: center;
    border-radius: 2px;
    background-color: #c3d3fb;
    pointer-events: none;
}
.status-light {
    width: 58px;
    height: 21px;
    margin-left: 2px;
    padding-left: 7px;
    border-left: 1px solid #aca899;
}
.status-light svg {
    width: 12px;
    height: 20px;
}
```
